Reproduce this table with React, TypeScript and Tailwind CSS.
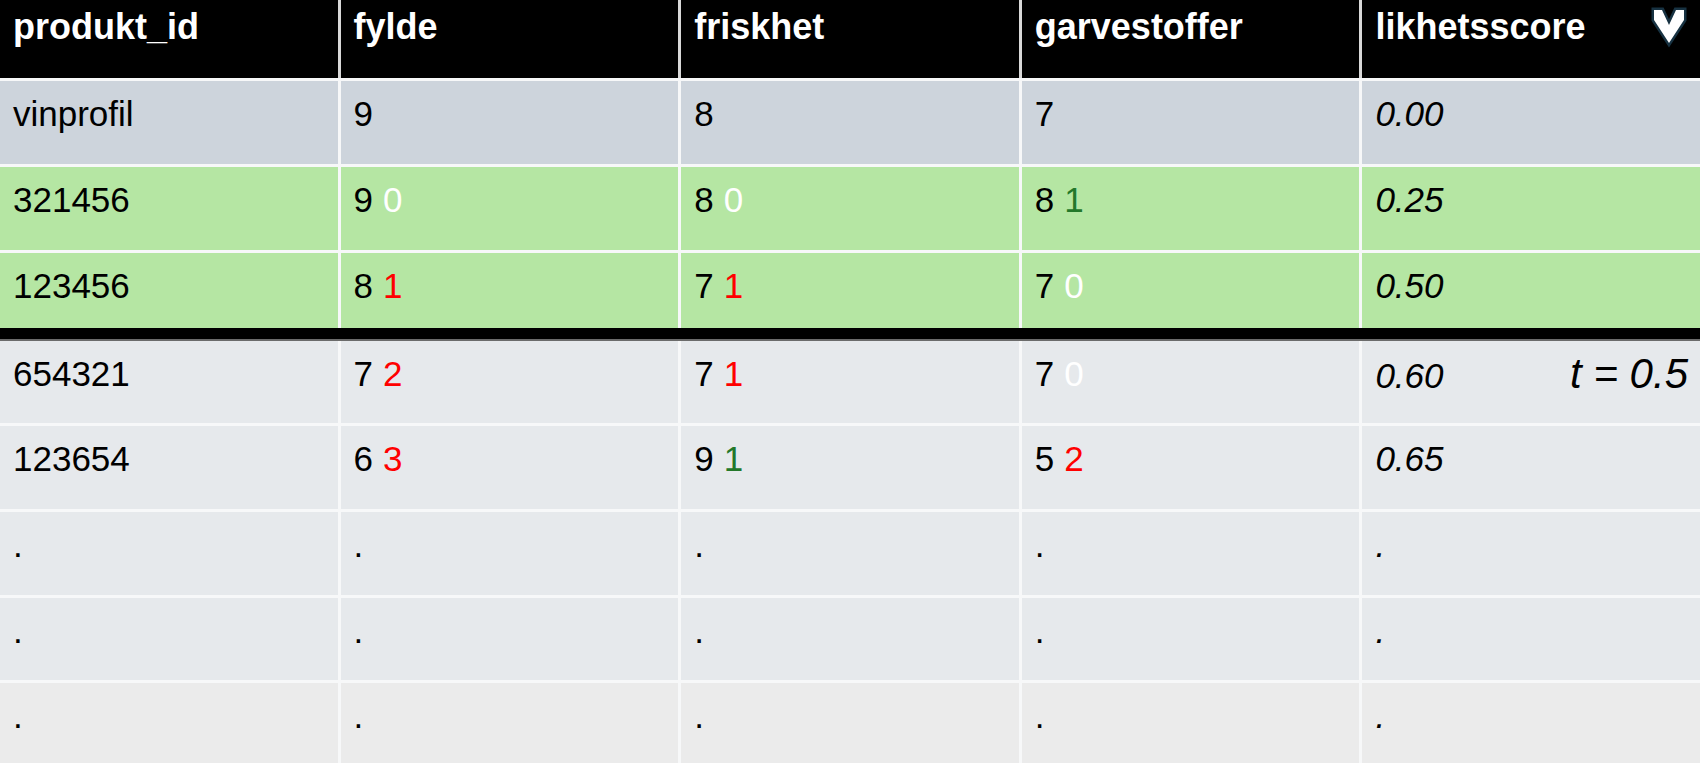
type Val = { v: string; d?: string; c?: "w" | "r" | "g" };

type Row = {
  id: string;
  cells: Val[];
  score: string;
  bg: string;
  note?: string;
};

const rows: Row[] = [
  {
    id: "vinprofil",
    cells: [{ v: "9" }, { v: "8" }, { v: "7" }],
    score: "0.00",
    bg: "bg-[#cdd4dc]",
  },
  {
    id: "321456",
    cells: [
      { v: "9", d: "0", c: "w" },
      { v: "8", d: "0", c: "w" },
      { v: "8", d: "1", c: "g" },
    ],
    score: "0.25",
    bg: "bg-[#b5e6a3]",
  },
  {
    id: "123456",
    cells: [
      { v: "8", d: "1", c: "r" },
      { v: "7", d: "1", c: "r" },
      { v: "7", d: "0", c: "w" },
    ],
    score: "0.50",
    bg: "bg-[#b5e6a3]",
  },
  {
    id: "654321",
    cells: [
      { v: "7", d: "2", c: "r" },
      { v: "7", d: "1", c: "r" },
      { v: "7", d: "0", c: "w" },
    ],
    score: "0.60",
    bg: "bg-[#e6e9ec]",
    note: "t = 0.5",
  },
  {
    id: "123654",
    cells: [
      { v: "6", d: "3", c: "r" },
      { v: "9", d: "1", c: "g" },
      { v: "5", d: "2", c: "r" },
    ],
    score: "0.65",
    bg: "bg-[#e6e9ec]",
  },
  { id: ".", cells: [{ v: "." }, { v: "." }, { v: "." }], score: ".", bg: "bg-[#e6e9ec]" },
  { id: ".", cells: [{ v: "." }, { v: "." }, { v: "." }], score: ".", bg: "bg-[#e6e9ec]" },
  { id: ".", cells: [{ v: "." }, { v: "." }, { v: "." }], score: ".", bg: "bg-[#ebebeb]" },
];

const heads = ["produkt_id", "fylde", "friskhet", "garvestoffer", "likhetsscore"];

const diffColor = {
  w: "text-white",
  r: "text-[#ff0000]",
  g: "text-[#23782a]",
};

// hoyde per rad, indeks-basert (rad 3 er kortere pga. den svarte streken)
const rowH = ["h-[83px]", "h-[83px]", "h-[75px]", "h-[82px]", "h-[83px]", "h-[83px]", "h-[82px]", "h-[80px]"];

const Chevron = () => (
  <svg width="42" height="46" viewBox="0 0 42 46" className="absolute right-[10px] top-[3px]">
    <polygon
      points="6,7 14,7 21,22 28,7 36,7 36,17 21,40 6,17"
      fill="#ffffff"
      stroke="#173242"
      strokeWidth="5"
      strokeLinejoin="miter"
      paintOrder="stroke"
    />
  </svg>
);

const Cell = ({ children, bg, extra = "" }: { children: React.ReactNode; bg: string; extra?: string }) => (
  <div className={`${bg} pl-[13px] pt-[13px] text-[35px] leading-[40px] text-black ${extra}`}>{children}</div>
);

export default function App() {
  return (
    <div className="w-[1700px] h-[763px] overflow-hidden bg-[#f7f8f9] flex flex-col font-['Liberation_Sans',Arial,sans-serif]">
      <div className="relative grid grid-cols-5 gap-x-[3px] h-[78px] bg-[#d9d9d9]">
        {heads.map((h) => (
          <div key={h} className="bg-black text-white font-bold text-[36px] leading-[40px] pl-[13px] pt-[7px]">
            {h}
          </div>
        ))}
        <Chevron />
      </div>

      {rows.map((r, i) => (
        <div key={i}>
          <div className={`grid grid-cols-5 gap-x-[3px] ${rowH[i]} ${i === 3 ? "" : "mt-[3px]"}`}>
            <Cell bg={r.bg}>{r.id}</Cell>
            {r.cells.map((c, j) => (
              <Cell key={j} bg={r.bg}>
                {c.v}
                {c.d && <span className={`ml-[10px] ${diffColor[c.c!]}`}>{c.d}</span>}
              </Cell>
            ))}
            <Cell bg={r.bg} extra="italic flex justify-between items-baseline pr-[12px]">
              <span>{r.score}</span>
              {r.note && <span className="text-[42px]">{r.note}</span>}
            </Cell>
          </div>
          {i === 2 && <div className="h-[13px] bg-black border-b-2 border-[#6b6b6b]" />}
        </div>
      ))}
    </div>
  );
}
